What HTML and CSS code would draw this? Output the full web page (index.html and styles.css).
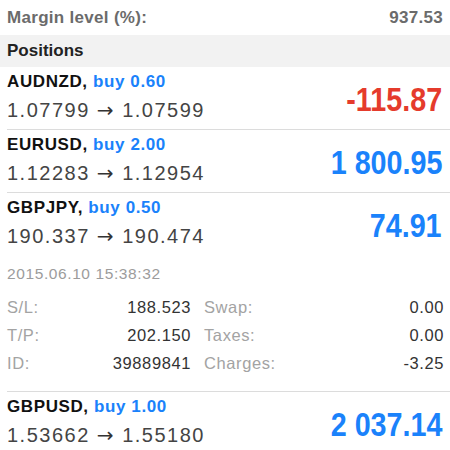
FILE: index.html
```html
<!DOCTYPE html>
<html lang="en">
<head>
    <meta charset="UTF-8">
    <meta name="viewport" content="width=device-width, initial-scale=1.0">
    <title>Positions</title>
    <link rel="stylesheet" href="styles.css">
</head>
<body>
    <div class="summary">
        <span>Margin level (%):</span>
        <span>937.53</span>
    </div>
    <div class="section">Positions</div>

    <div class="position">
        <div class="head">
            <div class="info">
                <div class="symbol">AUDNZD, <span class="type">buy 0.60</span></div>
                <div class="prices">1.07799 <span class="arrow">&rarr;</span> 1.07599</div>
            </div>
            <div class="profit loss">-115.87</div>
        </div>
    </div>

    <div class="position">
        <div class="head">
            <div class="info">
                <div class="symbol">EURUSD, <span class="type">buy 2.00</span></div>
                <div class="prices">1.12283 <span class="arrow">&rarr;</span> 1.12954</div>
            </div>
            <div class="profit">1 800.95</div>
        </div>
    </div>

    <div class="position open">
        <div class="head">
            <div class="info">
                <div class="symbol">GBPJPY, <span class="type">buy 0.50</span></div>
                <div class="prices">190.337 <span class="arrow">&rarr;</span> 190.474</div>
            </div>
            <div class="profit">74.91</div>
        </div>
        <div class="time">2015.06.10 15:38:32</div>
        <div class="details">
            <div class="cell"><span class="label">S/L:</span><span>188.523</span></div>
            <div class="cell"><span class="label">Swap:</span><span>0.00</span></div>
            <div class="cell"><span class="label">T/P:</span><span>202.150</span></div>
            <div class="cell"><span class="label">Taxes:</span><span>0.00</span></div>
            <div class="cell"><span class="label">ID:</span><span>39889841</span></div>
            <div class="cell"><span class="label">Charges:</span><span>-3.25</span></div>
        </div>
    </div>

    <div class="position">
        <div class="head">
            <div class="info">
                <div class="symbol">GBPUSD, <span class="type">buy 1.00</span></div>
                <div class="prices">1.53662 <span class="arrow">&rarr;</span> 1.55180</div>
            </div>
            <div class="profit">2 037.14</div>
        </div>
    </div>
</body>
</html>
```

FILE: styles.css
```css
body{
    margin: 0;
    font-family: "Liberation Sans", Arial, sans-serif;
    background-color: white;
    color: #333;
    overflow: hidden;
}
.summary{
    display: flex;
    justify-content: space-between;
    align-items: center;
    height: 35px;
    padding: 0 7px;
    font-size: 17px;
    font-weight: bold;
    letter-spacing: 0.3px;
    color: #6b6b6b;
}
.section{
    height: 32px;
    line-height: 32px;
    padding: 0 7px;
    background-color: #f2f2f2;
    font-size: 17px;
    font-weight: bold;
    color: #222;
}
.position{
    margin-left: 7px;
    padding: 4px 8px 6px 0;
    border-bottom: 1px solid #dcdcdc;
}
.head{
    display: flex;
    justify-content: space-between;
    align-items: center;
}
.symbol{
    font-size: 17px;
    line-height: 22px;
    font-weight: bold;
    letter-spacing: 0.6px;
    color: #111;
}
.type{
    color: #1a82fb;
}
.prices{
    margin-top: 4px;
    font-size: 20px;
    line-height: 26px;
    letter-spacing: 1.5px;
    color: #444;
}
.arrow{
    font-family: "DejaVu Sans", sans-serif;
    font-size: 20px;
    color: #333;
}
.profit{
    margin-top: 6px;
    font-size: 33px;
    font-weight: bold;
    color: #1a82fb;
    transform: scaleX(0.87);
    transform-origin: right center;
}
.profit.loss{
    color: #e53b2c;
}
.open{
    padding-bottom: 14px;
}
.time{
    margin-top: 15px;
    font-size: 15.5px;
    line-height: 20px;
    letter-spacing: 0.6px;
    color: #9c9c9c;
}
.details{
    display: grid;
    grid-template-columns: 184px 1fr;
    column-gap: 13px;
    margin-top: 9px;
    margin-right: -2px;
    font-size: 16.5px;
    line-height: 28px;
    letter-spacing: 0.6px;
    color: #333;
}
.cell{
    display: flex;
    justify-content: space-between;
}
.label{
    color: #a3a3a3;
}
```
